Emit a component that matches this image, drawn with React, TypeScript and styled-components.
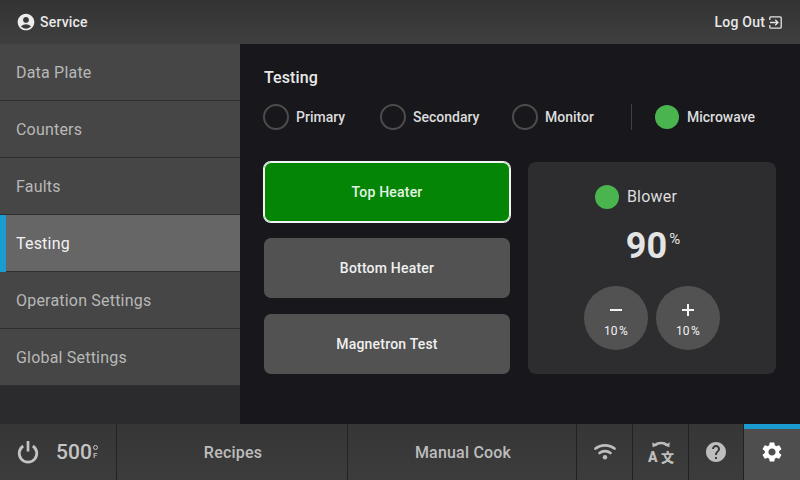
import React from "react";
import styled, { createGlobalStyle } from "styled-components";
import { MdAccountCircle, MdHelp, MdSettings } from "react-icons/md";

const Global = createGlobalStyle`
  html, body { margin: 0; padding: 0; background: #18181c; }
  * { box-sizing: border-box; }
  #root { width: 800px; height: 480px; overflow: hidden; }
`;
const Screen = styled.div`
  width: 800px; height: 480px; display: flex; flex-direction: column;
  font-family: Roboto, "Noto Sans CJK SC", sans-serif; background: #18181c; color: #e6e6e6;
`;
const Header = styled.header`
  height: 44px; flex: none; display: flex; align-items: center; justify-content: space-between;
  padding: 0 18px 0 16px; background: linear-gradient(#333333, #3f3f3f);
`;
const HeaderGroup = styled.div`
  display: flex; align-items: center; gap: 4px; font-size: 14px; font-weight: 500; letter-spacing: 0.2px; color: #e8e8e8;
`;
const Body = styled.div`flex: 1; display: flex; min-height: 0;`;
const Sidebar = styled.nav`width: 240px; flex: none; background: #2b2b2d;`;
const NavItem = styled.div<{ $active?: boolean }>`
  height: 57px; display: flex; align-items: center; font-size: 16px; letter-spacing: 0.2px;
  padding-left: ${p => (p.$active ? 10 : 16)}px;
  padding-bottom: 1px;
  background: ${p => (p.$active ? "#666666" : "#464646")};
  color: ${p => (p.$active ? "#f2f2f2" : "#b8b8b8")};
  border-left: ${p => (p.$active ? "6px solid #1b9cd0" : "none")};
  box-shadow: inset 0 -1px 0 #2e2e2e;
`;
const Main = styled.main`flex: 1; padding: 24px 24px 0 24px;`;
const Title = styled.h1`
  margin: 0; font-size: 16px; line-height: 19px; font-weight: 500; letter-spacing: 0.1px; color: #e8e8e8;
`;
const StatusRow = styled.div`
  display: flex; align-items: center; height: 26px; margin-top: 17px; margin-left: -1px;
`;
const Status = styled.div<{ $w: number }>`
  width: ${p => p.$w}px; display: flex; align-items: center; gap: 7px;
  font-size: 14px; font-weight: 500; letter-spacing: 0; color: #dcdcdc;
`;
const Ring = styled.span`
  width: 26px; height: 26px; border-radius: 50%; border: 2px solid #4c4c4c; flex: none;
`;
const Dot = styled.span`
  width: 24px; height: 24px; border-radius: 50%; background: #4ab44f; flex: none;
`;
const MicrowaveStatus = styled(Status)`gap: 8px;`;
const Divider = styled.span`
  width: 1px; height: 26px; background: #414141; margin-right: 23px;
`;
const Columns = styled.div`display: flex; gap: 18px; margin-top: 32px;`;
const Buttons = styled.div`width: 246px; display: flex; flex-direction: column; gap: 16px;`;
const Action = styled.div<{ $on?: boolean }>`
  height: 60px; border-radius: 7px; display: flex; align-items: center; justify-content: center;
  font-size: 14px; font-weight: 500; letter-spacing: 0.2px;
  background: ${p => (p.$on ? "#058505" : "#525252")};
  color: ${p => (p.$on ? "#e4f4e4" : "#f0f0f0")};
  box-shadow: ${p => (p.$on ? "0 0 0 1px #f4f4f4, inset 0 0 0 1px #f4f4f4" : "none")};
`;
const Panel = styled.section`
  width: 248px; height: 212px; border-radius: 8px; background: #2d2d2f;
  display: flex; flex-direction: column; align-items: center; padding-top: 23px;
`;
const BlowerRow = styled.div`
  display: flex; align-items: center; gap: 8px; font-size: 16px; letter-spacing: 0.2px; color: #dedede; height: 24px; margin-right: 32px;
`;
const BlowerName = styled.span`margin-top: -1px;`;
const Value = styled.div`
  margin-top: 15px; height: 44px; display: flex; align-items: flex-start; font-size: 36px; line-height: 44px; font-weight: 700; color: #e4e4e4; margin-left: 2px;
`;
const ValueUnit = styled.span`font-size: 15px; line-height: 15px; font-weight: 400; margin-left: 2px; margin-top: 8px;`;
const Steppers = styled.div`display: flex; gap: 8px; margin-top: 18px;`;
const Stepper = styled.div`
  width: 64px; height: 64px; border-radius: 50%; background: #525252; color: #f2f2f2;
  display: flex; flex-direction: column; align-items: center; padding-top: 17px;
`;
const StepLabel = styled.span`font-size: 12px; line-height: 13px; margin-top: 8px; word-spacing: -1.5px;`;
const Footer = styled.footer`
  height: 56px; flex: none; display: flex; background: linear-gradient(#363636, #3c3c3c);
`;
const FootCell = styled.div<{ $w: number; $active?: boolean }>`
  width: ${p => p.$w}px; flex: none; display: flex; align-items: center; justify-content: center;
  font-size: 16px; font-weight: 500; letter-spacing: 0.2px; color: #bdbdbd;
  border-right: 1px solid #222226;
  &:last-child { border-right: none; }
  ${p => p.$active && "background: #4e4e4e; border-top: 5px solid #1b9cd0; padding-bottom: 5px; color: #fff;"}
`;
const LabelCell = styled(FootCell)`padding-left: 2px;`;
const Temp = styled.span`font-size: 21px; font-weight: 500; color: #c4c4c4; margin-left: 17px; letter-spacing: 0;`;
const TempUnit = styled.span`
  display: flex; flex-direction: column; align-items: center; gap: 2px; margin-left: 1px; margin-right: 1px;
`;
const DegreeRing = styled.span`width: 5px; height: 5px; border-radius: 50%; border: 1px solid #c4c4c4;`;
const UnitLetter = styled.span`font-size: 8px; line-height: 7px; font-weight: 500; color: #c4c4c4;`;
const GlyphIcon = styled.svg`display: block; flex: none;`;

const Plus = ({ minus }: { minus?: boolean }) => (
  <GlyphIcon width="14" height="14" viewBox="0 0 14 14">
    <rect x="1" y="6" width="12" height="2" fill="#f2f2f2" />
    {!minus && <rect x="6" y="1" width="2" height="12" fill="#f2f2f2" />}
  </GlyphIcon>
);
const LogOut = () => (
  <GlyphIcon width="13" height="13" viewBox="0 0 13 13" fill="none" stroke="#e4e4e4" strokeWidth="1.3">
    <path d="M.8 4V1.8a1 1 0 0 1 1-1h9.4a1 1 0 0 1 1 1v9.4a1 1 0 0 1-1 1H1.8a1 1 0 0 1-1-1V9" />
    <path d="M1 6.5h8M6.2 3.7L9 6.5l-2.8 2.8" />
  </GlyphIcon>
);
const Power = () => (
  <GlyphIcon width="22" height="24" viewBox="0 0 22 24" fill="none" stroke="#c4c4c4" strokeWidth="2.7">
    <path d="M11 1v10.5" />
    <path d="M6.2 6a8.8 8.8 0 1 0 9.6 0" />
  </GlyphIcon>
);
const Wifi = () => (
  <GlyphIcon width="24" height="18" viewBox="0 0 24 18" fill="none" stroke="#bdbdbd" strokeWidth="2.7" strokeLinecap="round">
    <path d="M2.5 5.5C7.5 1.2 16.5 1.2 21.5 5.5" />
    <path d="M6.5 10C9.5 7.6 14.5 7.6 17.5 10" />
    <circle cx="12" cy="14.2" r="2.2" fill="#bdbdbd" stroke="none" />
  </GlyphIcon>
);
const Translate = () => (
  <GlyphIcon width="28" height="32" viewBox="0 0 28 32">
    <path d="M8 9C11 6.4 17 6.4 20 9" fill="none" stroke="#bdbdbd" strokeWidth="2.4" />
    <path d="M5.2 6.2l.5 5 4.8-1.6zM22.8 6.2l-.5 5-4.8-1.6z" fill="#bdbdbd" />
    <text x="1" y="26" fontSize="14" fontWeight="900" fill="#bdbdbd" fontFamily="Roboto, sans-serif">A</text>
    <text x="14" y="25.5" fontSize="13" fontWeight="900" fill="#bdbdbd" fontFamily="'Noto Sans CJK SC', sans-serif">文</text>
  </GlyphIcon>
);

export default function App() {
  return (
    <Screen>
      <Global />
      <Header>
        <HeaderGroup><MdAccountCircle size={20} color="#ececec" />Service</HeaderGroup>
        <HeaderGroup>Log Out<LogOut /></HeaderGroup>
      </Header>
      <Body>
        <Sidebar>
          <NavItem>Data Plate</NavItem>
          <NavItem>Counters</NavItem>
          <NavItem>Faults</NavItem>
          <NavItem $active>Testing</NavItem>
          <NavItem>Operation Settings</NavItem>
          <NavItem>Global Settings</NavItem>
        </Sidebar>
        <Main>
          <Title>Testing</Title>
          <StatusRow>
            <Status $w={117}><Ring />Primary</Status>
            <Status $w={132}><Ring />Secondary</Status>
            <Status $w={119}><Ring />Monitor</Status>
            <Divider />
            <MicrowaveStatus $w={120}><Dot />Microwave</MicrowaveStatus>
          </StatusRow>
          <Columns>
            <Buttons>
              <Action $on>Top Heater</Action>
              <Action>Bottom Heater</Action>
              <Action>Magnetron Test</Action>
            </Buttons>
            <Panel>
              <BlowerRow><Dot /><BlowerName>Blower</BlowerName></BlowerRow>
              <Value>90<ValueUnit>%</ValueUnit></Value>
              <Steppers>
                <Stepper><Plus minus /><StepLabel>10 %</StepLabel></Stepper>
                <Stepper><Plus /><StepLabel>10 %</StepLabel></Stepper>
              </Steppers>
            </Panel>
          </Columns>
        </Main>
      </Body>
      <Footer>
        <FootCell $w={117}>
          <Power />
          <Temp>500</Temp>
          <TempUnit><DegreeRing /><UnitLetter>F</UnitLetter></TempUnit>
        </FootCell>
        <LabelCell $w={231}>Recipes</LabelCell>
        <LabelCell $w={229}>Manual Cook</LabelCell>
        <FootCell $w={56}><Wifi /></FootCell>
        <FootCell $w={56}><Translate /></FootCell>
        <FootCell $w={55}><MdHelp size={24} color="#bdbdbd" /></FootCell>
        <FootCell $w={56} $active><MdSettings size={24} color="#fff" /></FootCell>
      </Footer>
    </Screen>
  );
}
